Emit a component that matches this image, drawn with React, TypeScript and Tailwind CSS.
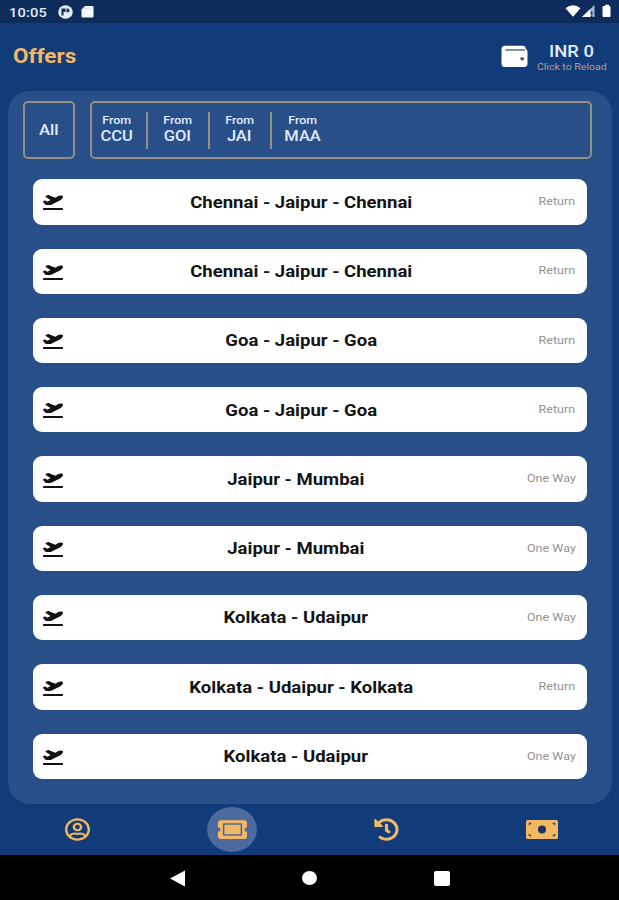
import React from 'react';
import { FaHistory, FaPlaneDeparture, FaRegUserCircle, FaTicketAlt } from 'react-icons/fa';

const offers = [
  { route: 'Chennai - Jaipur - Chennai', type: 'Return' },
  { route: 'Chennai - Jaipur - Chennai', type: 'Return' },
  { route: 'Goa - Jaipur - Goa', type: 'Return' },
  { route: 'Goa - Jaipur - Goa', type: 'Return' },
  { route: 'Jaipur - Mumbai', type: 'One Way' },
  { route: 'Jaipur - Mumbai', type: 'One Way' },
  { route: 'Kolkata - Udaipur', type: 'One Way' },
  { route: 'Kolkata - Udaipur - Kolkata', type: 'Return' },
  { route: 'Kolkata - Udaipur', type: 'One Way' },
];

const airports = ['CCU', 'GOI', 'JAI', 'MAA'];

function StatusBar() {
  return (
    <div className="flex h-[23px] items-center bg-[#0e2c5b] pl-[9px] pr-[8px] text-[#e4ecf8]">
      <span className="w-[38px] origin-left scale-x-[1.08] pt-px text-[13.5px] font-medium tracking-[0.2px]">10:05</span>
      <svg className="ml-[11px]" width="15" height="14" viewBox="0 0 15 14">
        <ellipse cx="7.5" cy="7" rx="7.3" ry="6.8" fill="#e4ecf8" />
        <path d="M3.500 3.500h4v3.500h-2v3.500h-2z" fill="#0e2c5b" />
        <path d="M8.500 3.500h1a1.900 1.900 0 0 1 0 3.800h-1z" fill="#0e2c5b" />
      </svg>
      <svg className="ml-[8px]" width="13" height="13" viewBox="0 0 13 13">
        <path d="M4 1h7.5Q12.5 1 12.5 2v9.500Q12.500 12.500 11.500 12.500h-10Q.5 12.500.5 11.500V4.500z" fill="#f4f7fb" />
        <path d="M4.500 2.500v2M7 2.500v2M9.500 2.500v2" stroke="#b9c6da" strokeWidth="1" />
      </svg>
      <svg className="ml-auto mb-[2px]" width="46" height="14" viewBox="0 0 46 14">
        <path d="M.5 4.200Q8 -1.500 15.500 4.200L8 12.800z" fill="white" />
        <path d="M17 13 29.500 1V13z" fill="#a9bad3" />
        <path d="M17 13 25 5.300V13z" fill="white" />
        <path d="M26 7.500h1.500v3H26zM26 11.500h1.500V13H26z" fill="#0e2c5b" />
        <path d="M38.500 2H40V.8h4V2h.5q1 0 1 1v9q0 1-1 1h-6q-1 0-1-1V3q0-1 1-1" fill="white" />
      </svg>
    </div>
  );
}

function Header() {
  return (
    <header className="flex h-[68px] items-start pl-[13px] pr-[12px]">
      <h1 className="mt-[19px] origin-left scale-x-[1.07] text-[21px] font-bold leading-[28px] text-[#f3b867]">Offers</h1>
      <svg className="ml-auto mt-[22px]" width="27" height="23" viewBox="0 0 27 23">
        <path d="M4 .8h18q2.500 0 2.700 3Q26.500 4.800 26.500 7v11.500q0 3.500-3.500 3.500H4Q.5 22 .5 18.500v-14Q.5 .8 4 .8" fill="white" />
        <path d="M5 5h18.500" stroke="#536b94" strokeWidth="1.400" strokeLinecap="round" />
        <ellipse cx="21.200" cy="13.700" rx="1.900" ry="1.700" fill="#3d5989" />
      </svg>
      <div className="ml-[9px] flex w-[70px] flex-col items-center pt-[19px] text-[#e2edfd]">
        <span className="scale-x-[1.15] whitespace-nowrap text-[16px] font-medium leading-[20px]">INR 0</span>
        <span className="scale-x-[1.17] whitespace-nowrap text-[9px] leading-[10px] text-[#b7a28a]">Click to Reload</span>
      </div>
    </header>
  );
}

function Filters() {
  return (
    <div className="flex h-[58px] gap-[15px] pl-[14.500px] pr-[20px] text-[#e0ebfb]">
      <button className="flex w-[52px] items-center justify-center rounded-[5px] border-2 border-[#978e83] text-[15px] font-medium">
        <span className="scale-x-[1.12]">All</span>
      </button>
      <div className="flex flex-1 items-center rounded-[5px] border-2 border-[#978e83]">
        {airports.map((code, i) => (
          <div
            key={code}
            className={`flex h-[37px] flex-col items-center justify-center pb-[2px] ${i === 0 ? 'w-[56px] pr-[4px]' : 'w-[62px]'} ${i < 3 ? 'border-r-2 border-[#978e83]' : ''}`}
          >
            <span className="scale-x-[1.13] text-[11px] font-medium leading-[14px]">From</span>
            <span className="scale-x-[1.1] text-[15px] font-medium leading-[17px]">{code}</span>
          </div>
        ))}
      </div>
    </div>
  );
}

function OfferCard({ route, type }: { route: string; type: string }) {
  return (
    <li className="flex h-[45.300px] items-center rounded-[9px] bg-white pl-[10px] pr-[11px] pt-px">
      <FaPlaneDeparture className="h-[16px] w-[20px] text-[#111]" preserveAspectRatio="none" />
      <span className="flex-1 scale-x-[1.09] whitespace-nowrap text-center text-[17px] font-bold text-[#141414]">{route}</span>
      <span className="origin-right scale-x-[1.14] whitespace-nowrap pl-[4px] text-right text-[11px] text-[#929292]">{type}</span>
    </li>
  );
}

function BottomNav() {
  return (
    <nav className="grid h-[51px] grid-cols-4 place-items-center text-[#f3b863]">
      <FaRegUserCircle className="h-[23px] w-[25px]" preserveAspectRatio="none" />
      <div className="flex h-[45px] w-[50px] items-center justify-center rounded-[50%] bg-[#4c6a9d]">
        <FaTicketAlt className="h-[25px] w-[29px]" preserveAspectRatio="none" />
      </div>
      <FaHistory className="h-[23px] w-[25px]" preserveAspectRatio="none" />
      <svg width="32" height="19" viewBox="0 0 32 19">
        <rect width="32" height="19" rx="1.500" fill="currentColor" />
        <ellipse cx="16" cy="9.500" rx="4" ry="3.900" fill="#17345f" />
        <path d="M3 3h2.500L3 5.200zM29 3h-2.500L29 5.200zM3 16h2.500L3 13.800zM29 16h-2.500l2.500-2.200z" fill="#3b4964" stroke="#3b4964" strokeWidth=".5" />
      </svg>
    </nav>
  );
}

function SystemNav() {
  return (
    <div className="flex h-[45px] items-center justify-center gap-[116.500px] bg-black pt-px">
      <svg width="16" height="17" viewBox="0 0 16 17"><path d="M0 8.500 15 .5v16z" fill="white" /></svg>
      <div className="h-[14px] w-[15px] rounded-[50%] bg-white" />
      <div className="h-[15px] w-[16px] rounded-[2px] bg-white" />
    </div>
  );
}

export default function App() {
  return (
    <div className="flex h-[900px] w-[619px] flex-col overflow-hidden bg-[#123b79] font-['Roboto',sans-serif]">
      <StatusBar />
      <Header />
      <main className="ml-[8px] mr-[7px] h-[713px] rounded-[22px] bg-[#294f88] pt-[10px]">
        <Filters />
        <ul className="flex flex-col gap-[24px] pl-[25px] pr-[25.500px] pt-[20.300px]">
          {offers.map((offer, i) => (
            <OfferCard key={i} {...offer} />
          ))}
        </ul>
      </main>
      <BottomNav />
      <SystemNav />
    </div>
  );
}
